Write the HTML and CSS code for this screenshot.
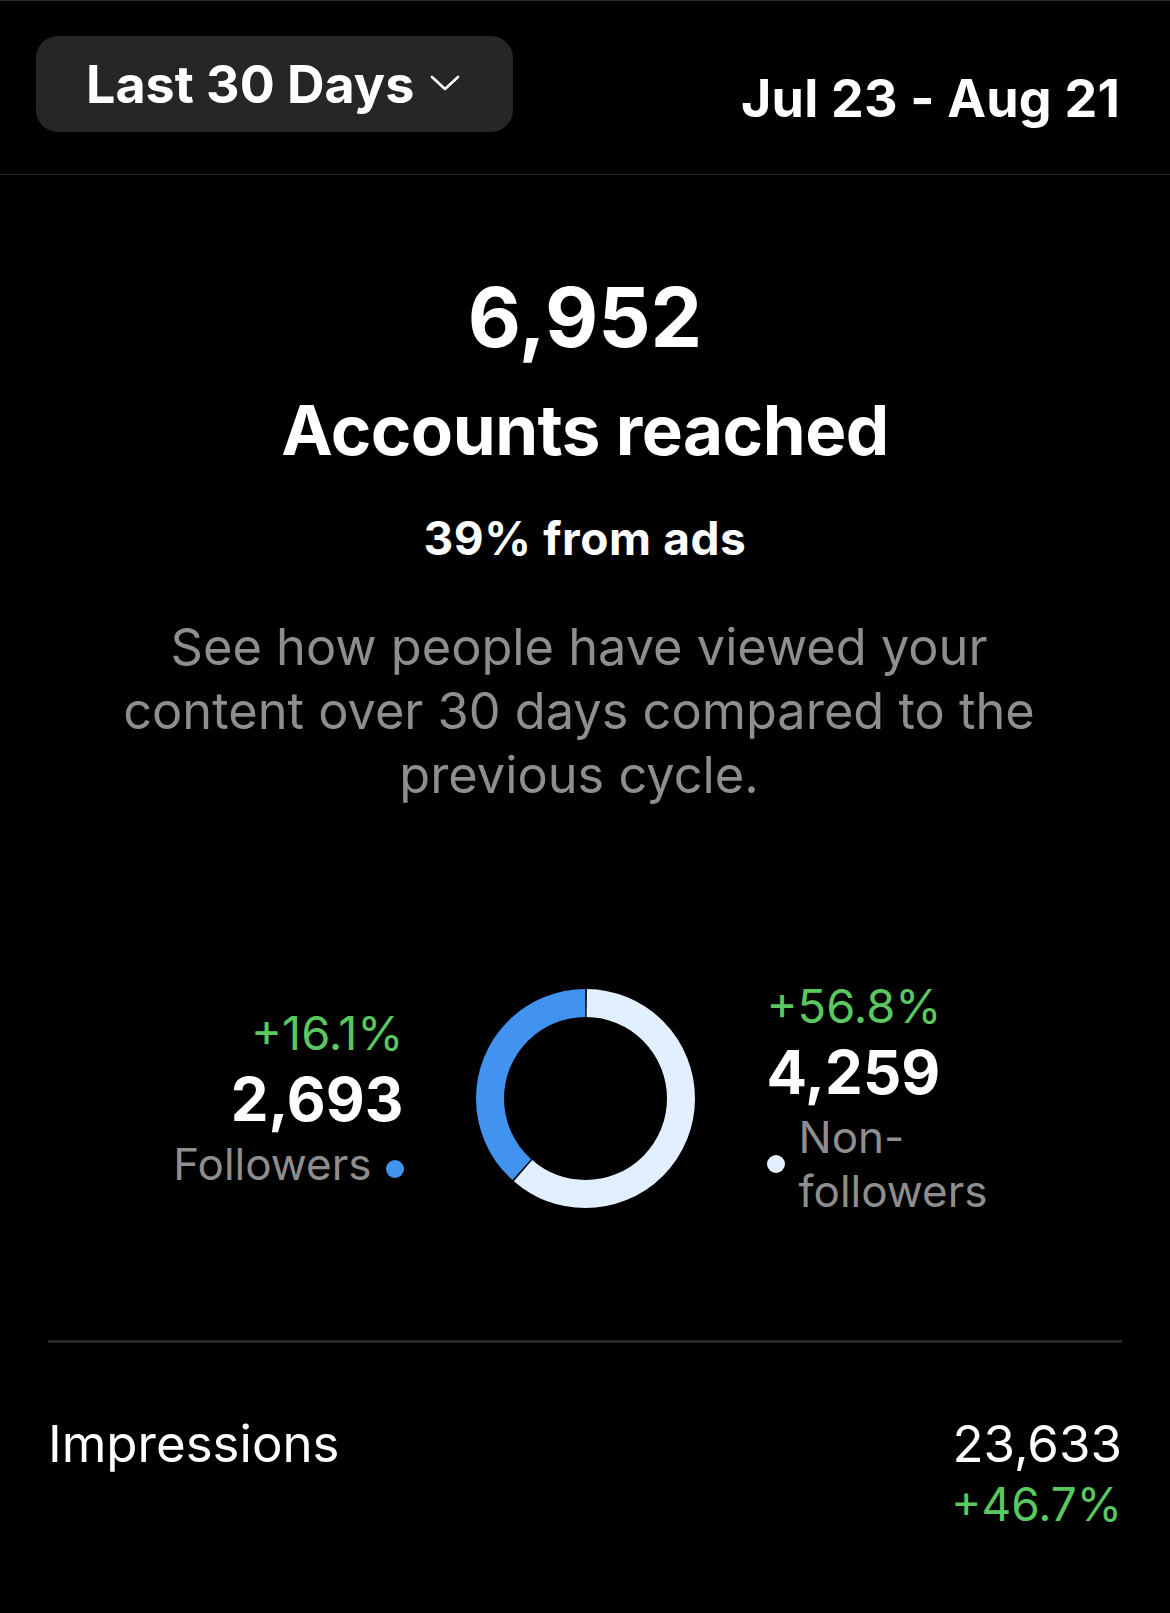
FILE: index.html
```html
<!DOCTYPE html>
<html lang="en">
<head>
<meta charset="utf-8">
<title>Accounts reached</title>
<link rel="stylesheet" href="styles.css">
</head>
<body>
  <header class="topbar">
    <button class="range-btn">
      <span class="range-label">Last 30 Days</span>
      <svg class="chevron" width="30" height="16" viewBox="0 0 30 16" aria-hidden="true">
        <path d="M2 2 L15 14 L28 2" fill="none" stroke="#ffffff" stroke-width="2.6" stroke-linecap="round" stroke-linejoin="round"/>
      </svg>
    </button>
    <div class="date-range">Jul 23 - Aug 21</div>
  </header>

  <main class="content">
    <section class="hero">
      <div class="total">6,952</div>
      <h1 class="title">Accounts reached</h1>
      <div class="ads">39% from ads</div>
      <p class="desc">See how people have viewed your content over 30 days compared to the previous cycle.</p>
    </section>

    <section class="breakdown">
      <div class="col col-left">
        <div class="pct">+16.1%</div>
        <div class="num">2,693</div>
        <div class="label-row">
          <span class="label">Followers</span>
          <span class="dot dot-blue"></span>
        </div>
      </div>

      <svg class="donut" width="219" height="219" viewBox="0 0 219 219" aria-hidden="true">
        <g transform="rotate(-90 109.5 109.5)">
          <circle cx="109.5" cy="109.5" r="95.5" fill="none" stroke="#e1efff" stroke-width="28"
                  stroke-dasharray="366.3 600" stroke-dashoffset="-1.3"/>
          <circle cx="109.5" cy="109.5" r="95.5" fill="none" stroke="#4293ef" stroke-width="28"
                  stroke-dasharray="229.6 600" stroke-dashoffset="-369.2"/>
        </g>
      </svg>

      <div class="col col-right">
        <div class="pct">+56.8%</div>
        <div class="num">4,259</div>
        <div class="label-row">
          <span class="dot dot-light"></span>
          <span class="label">Non-followers</span>
        </div>
      </div>
    </section>

    <hr class="divider">

    <section class="metric">
      <div class="metric-name">Impressions</div>
      <div class="metric-values">
        <div class="metric-value">23,633</div>
        <div class="metric-change">+46.7%</div>
      </div>
    </section>
  </main>
</body>
</html>
```

FILE: styles.css
```css
* {
  box-sizing: border-box;
}

html, body {
  margin: 0;
  padding: 0;
  background: #000000;
}

body {
  color: #ffffff;
  font-family: Inter, "Liberation Sans", Arial, sans-serif;
  border-top: 1px solid #2c2c2c;
  min-height: 1613px;
}

/* Header */
.topbar {
  display: flex;
  justify-content: space-between;
  align-items: flex-start;
  height: 174px;
  padding: 35px 50px 0 36px;
  border-bottom: 1px solid #2a2a2a;
}

.range-btn {
  display: flex;
  align-items: center;
  width: 477px;
  height: 96px;
  padding: 2px 0 0 50px;
  border: none;
  border-radius: 22px;
  background: #262626;
  color: #ffffff;
  font-family: inherit;
  cursor: pointer;
}

.range-label {
  font-size: 52px;
  font-weight: 700;
  line-height: 60px;
}

.chevron {
  margin-left: 16px;
  margin-top: -4px;
}

.date-range {
  margin-top: 33px;
  font-size: 52px;
  font-weight: 700;
  line-height: 60px;
  letter-spacing: 0.2px;
}

/* Hero */
.content {
  display: flex;
  flex-direction: column;
}

.hero {
  display: flex;
  flex-direction: column;
  align-items: center;
  text-align: center;
}

.total {
  margin-top: 98px;
  font-size: 82px;
  font-weight: 700;
  line-height: 90px;
}

.title {
  margin: 27px 0 0;
  font-size: 69px;
  font-weight: 700;
  line-height: 80px;
  letter-spacing: -0.5px;
}

.ads {
  margin-top: 43px;
  font-size: 46px;
  font-weight: 700;
  line-height: 50px;
  letter-spacing: 0.6px;
}

.desc {
  margin: 52px 12px 0 0;
  max-width: 980px;
  font-size: 50.5px;
  font-weight: 400;
  line-height: 64px;
  color: #8e8e8e;
}

/* Breakdown */
.breakdown {
  display: flex;
  justify-content: center;
  align-items: center;
  gap: 72px;
  height: 260px;
  margin-top: 161px;
}

.col {
  width: 260px;
  display: flex;
  flex-direction: column;
}

.col-left {
  align-items: flex-end;
  text-align: right;
}

.col-right {
  align-items: flex-start;
  text-align: left;
}

.pct {
  font-size: 47px;
  line-height: 56px;
  color: #5ac85e;
}

.num {
  font-size: 60px;
  font-weight: 700;
  line-height: 76px;
}

.label-row {
  display: flex;
  align-items: center;
  gap: 14px;
}

.label {
  font-size: 44px;
  line-height: 54px;
  color: #8e8e8e;
}

.col-right .label {
  width: 210px;
}

.col-left .dot {
  margin-top: 10px;
}

.dot {
  flex: none;
  width: 18px;
  height: 18px;
  border-radius: 50%;
}

.dot-blue {
  background: #4293ef;
}

.dot-light {
  background: #e1efff;
}

.donut {
  flex: none;
  display: block;
}

/* Divider + metric */
.divider {
  width: auto;
  margin: 112px 48px 0;
  border: none;
  height: 3px;
  background: #262626;
}

.metric {
  display: flex;
  justify-content: space-between;
  align-items: flex-start;
  margin-top: 71px;
  padding: 0 48px 0 48px;
}

.metric-name {
  font-size: 51px;
  line-height: 60px;
}

.metric-values {
  display: flex;
  flex-direction: column;
  align-items: flex-end;
}

.metric-value {
  font-size: 51px;
  line-height: 60px;
}

.metric-change {
  font-size: 46px;
  line-height: 60px;
  color: #5ac85e;
}
```
